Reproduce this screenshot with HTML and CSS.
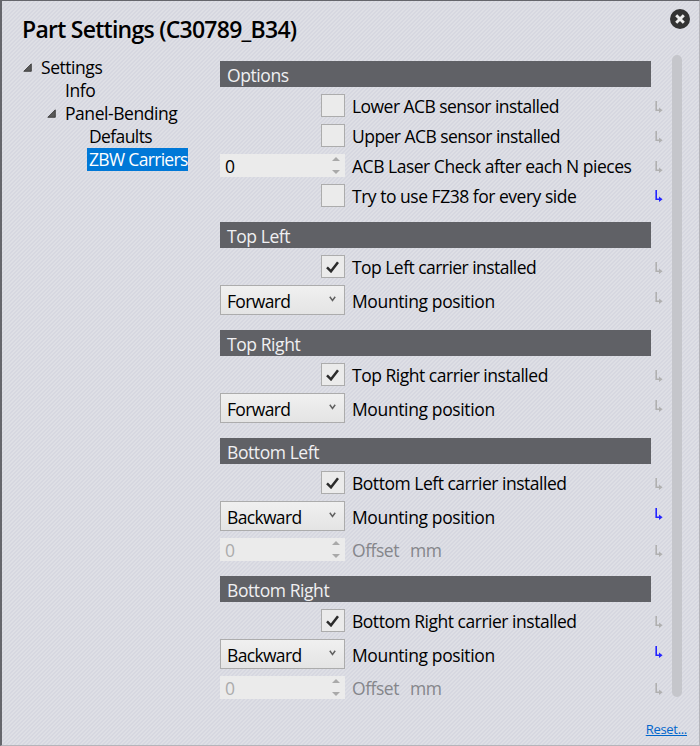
FILE: index.html
```html
<!DOCTYPE html>
<html lang="en">
<head>
<meta charset="utf-8">
<title>Part Settings</title>
<link rel="stylesheet" href="styles.css">
</head>
<body>
<svg width="0" height="0" class="defs">
  <symbol id="ret" viewBox="0 0 8 12"><path d="M1.2 0V9.2H5" fill="none" stroke="currentColor" stroke-width="1.6"/><path d="M4 6.4L7.6 9.2L4 12Z" fill="currentColor"/></symbol>
  <symbol id="tick" viewBox="0 0 13 12"><path d="M1 6.3L5 10.3L12 1.2" fill="none" stroke="#2b2b2b" stroke-width="2.5"/></symbol>
  <symbol id="chev" viewBox="0 0 7 6"><path d="M.8 .8L3.5 4.4L6.2 .8" fill="none" stroke="#606060" stroke-width="1.5"/></symbol>
  <symbol id="spin" viewBox="0 0 8 17"><path d="M0 4L4 0L8 4ZM0 13L4 17L8 13Z" fill="#a9a9a9"/></symbol>
  <symbol id="node" viewBox="0 0 9 9"><path d="M8.3 .8V8.3H.8Z" fill="#595959" stroke="#303030" stroke-width=".8"/></symbol>
</svg>
<div class="dialog">
  <header class="top"><h1>Part Settings (C30789_B34)</h1>
    <svg class="close" viewBox="0 0 20 20"><circle cx="10" cy="10" r="10" fill="#333"/><path d="M6.2 6.2L13.8 13.8M13.8 6.2L6.2 13.8" stroke="#eee" stroke-width="2.9"/></svg>
  </header>
  <div class="content">
    <nav class="tree">
      <div class="item l0"><svg><use href="#node"/></svg><span>Settings</span></div>
      <div class="item l1"><span>Info</span></div>
      <div class="item l1 parent"><svg><use href="#node"/></svg><span>Panel-Bending</span></div>
      <div class="item l2"><span>Defaults</span></div>
      <div class="item l2 selected"><span>ZBW Carriers</span></div>
    </nav>
    <main class="form">
      <section class="s1">
        <h2>Options</h2>
        <div class="row check"><i class="box"></i><label class="tight">Lower ACB sensor installed</label><svg class="ret"><use href="#ret"/></svg></div>
        <div class="row check"><i class="box"></i><label class="tight">Upper ACB sensor installed</label><svg class="ret"><use href="#ret"/></svg></div>
        <div class="row num"><div class="spin"><span>0</span><svg><use href="#spin"/></svg></div><label>ACB Laser Check after each N pieces</label><svg class="ret"><use href="#ret"/></svg></div>
        <div class="row check last"><i class="box"></i><label>Try to use FZ38 for every side</label><svg class="ret on"><use href="#ret"/></svg></div>
      </section>
      <section class="s2">
        <h2>Top Left</h2>
        <div class="row check"><i class="box"><svg><use href="#tick"/></svg></i><label class="tight">Top Left carrier installed</label><svg class="ret"><use href="#ret"/></svg></div>
        <div class="row combo"><div class="select"><span>Forward</span><svg><use href="#chev"/></svg></div><label>Mounting position</label><svg class="ret"><use href="#ret"/></svg></div>
      </section>
      <section class="s3">
        <h2>Top Right</h2>
        <div class="row check"><i class="box"><svg><use href="#tick"/></svg></i><label>Top Right carrier installed</label><svg class="ret"><use href="#ret"/></svg></div>
        <div class="row combo"><div class="select"><span>Forward</span><svg><use href="#chev"/></svg></div><label>Mounting position</label><svg class="ret"><use href="#ret"/></svg></div>
      </section>
      <section class="s4">
        <h2>Bottom Left</h2>
        <div class="row check"><i class="box"><svg><use href="#tick"/></svg></i><label>Bottom Left carrier installed</label><svg class="ret"><use href="#ret"/></svg></div>
        <div class="row combo"><div class="select"><span>Backward</span><svg><use href="#chev"/></svg></div><label>Mounting position</label><svg class="ret on"><use href="#ret"/></svg></div>
        <div class="row num off"><div class="spin"><span>0</span><svg><use href="#spin"/></svg></div><label>Offset<span class="unit">mm</span></label><svg class="ret"><use href="#ret"/></svg></div>
      </section>
      <section class="s5">
        <h2>Bottom Right</h2>
        <div class="row check"><i class="box"><svg><use href="#tick"/></svg></i><label>Bottom Right carrier installed</label><svg class="ret"><use href="#ret"/></svg></div>
        <div class="row combo"><div class="select"><span>Backward</span><svg><use href="#chev"/></svg></div><label>Mounting position</label><svg class="ret on"><use href="#ret"/></svg></div>
        <div class="row num off"><div class="spin"><span>0</span><svg><use href="#spin"/></svg></div><label>Offset<span class="unit">mm</span></label><svg class="ret"><use href="#ret"/></svg></div>
      </section>
    </main>
    <div class="scrollbar"></div>
  </div>
  <footer><a>Reset...</a></footer>
</div>
</body>
</html>
```
FILE: styles.css
```css
* { box-sizing: border-box; }
body { margin: 0; font: 17.5px/22px "Open Sans", "Noto Sans", sans-serif; color: #000; }
.defs { display: block; position: absolute; }
svg { display: block; flex: none; }
.dialog {
  width: 700px; height: 746px; overflow: hidden;
  display: flex; flex-direction: column;
  border: solid #65666c; border-width: 1px 1px 1px 2px;
  border-right-color: #b4b4ba; border-bottom-color: #b4b4ba;
  background: repeating-linear-gradient(135deg, #d6d7e0 0 1.4142px, #dedfe5 1.4142px 2.8284px);
}
.top { height: 54px; display: flex; justify-content: space-between; padding: 8px 9px 0 20px; }
h1 { margin: 4px 0 0; font-size: 23px; line-height: 32px; font-weight: 600; letter-spacing: -.74px; white-space: nowrap; }
.close { width: 20px; height: 20px; }
.content { height: 645px; display: flex; }
.tree { width: 218px; padding-top: 1px; letter-spacing: -.45px; }
.item { height: 23px; display: flex; align-items: center; white-space: nowrap; }
.item svg { width: 9px; height: 9px; margin-right: 9px; }
.l0 { padding-left: 21px; }
.l1 { padding-left: 63px; }
.parent { padding-left: 45px; }
.l2 { padding-left: 85px; letter-spacing: -.6px; }
.item span { line-height: 23px; }
.l2 span { padding-left: 2px; }
.selected span { width: 101px; background: #0078d7; color: #fff; letter-spacing: -.68px; }
.form { width: 443px; padding-top: 6px; }
section { display: flex; flex-direction: column; }
h2 { width: 431px; height: 26px; margin: 0 0 7px; padding: 2px 0 0 7px; background: #606166; color: #f0f0f2; font-size: 17.5px; line-height: 24px; font-weight: 400; letter-spacing: -.42px; }
.row { display: grid; grid-template-columns: 125px 302px 10px; column-gap: 7px; align-items: center; }
.row label { white-space: nowrap; letter-spacing: -.48px; padding-top: 1px; }
.row .tight { letter-spacing: -.54px; }
.combo label { letter-spacing: -.37px; }
.check { height: 23px; margin-bottom: 7px; }
.box { justify-self: end; width: 24px; height: 23px; border: 1px solid #acacac; background: #ebebeb; display: flex; align-items: center; justify-content: center; }
.box svg { width: 13px; height: 12px; margin-right: 1px; }
.num { height: 23px; margin-bottom: 6px; }
.spin { height: 23px; background: #ebebeb; display: flex; align-items: center; justify-content: space-between; padding: 0 5px; }
.spin span { padding-top: 1px; }
.spin svg { width: 8px; height: 17px; }
.combo { height: 30px; }
.select { height: 30px; border: 1px solid #acacac; background: linear-gradient(#f0f0f0, #e4e4e4); display: flex; align-items: center; justify-content: space-between; padding: 0 8px 0 6px; letter-spacing: -.66px; }
.select span { padding-top: 1px; }
.select svg { width: 7px; height: 6px; margin-bottom: 3px; }
.ret { width: 8px; height: 12px; color: #b0b0b0; margin: 2px 0 0 -6px; }
.on { color: #2424ff; }
.combo .ret { margin-top: 0; margin-bottom: 4px; }
.s1 { height: 161px; }
.s2, .s3 { height: 108px; }
.s4 { height: 138px; }
.s4 .combo, .s5 .combo { margin-bottom: 7px; }
.last { height: 24px; }
.off label { color: #85868b; }
.off .spin span { color: #acacac; }
.unit { margin-left: 11px; }
.scrollbar { width: 10px; height: 642px; margin: 0 0 0 9px; border-radius: 5px; background: #c5c6cb; }
footer { display: flex; justify-content: flex-end; padding: 20px 12px 0 0; }
footer a { font-size: 13px; line-height: 18px; color: #0066cc; text-decoration: underline; letter-spacing: -.3px; }
```
